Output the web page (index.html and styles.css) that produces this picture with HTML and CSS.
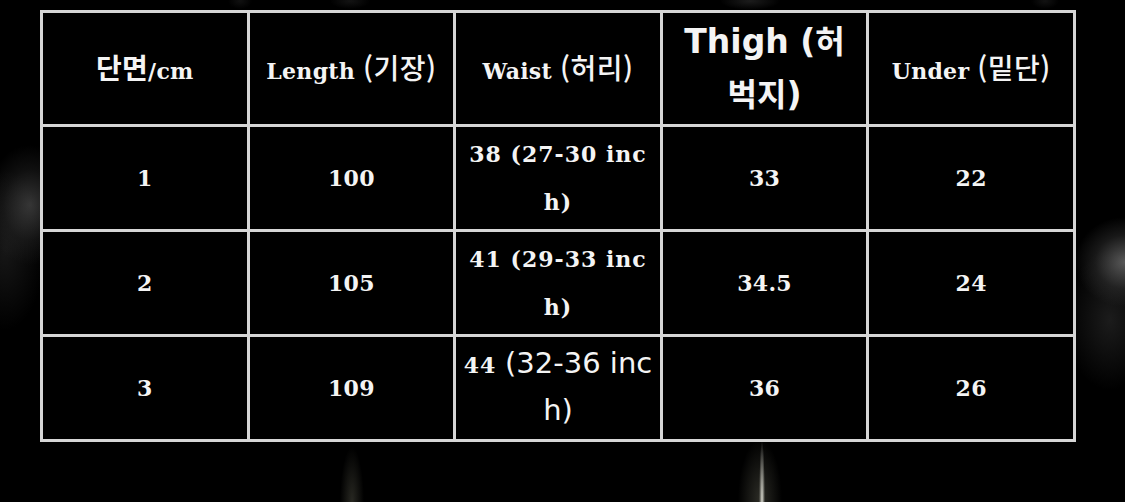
FILE: index.html
```html
<!DOCTYPE html>
<html lang="ko">
<head>
<meta charset="utf-8">
<title>Size chart</title>
<link rel="stylesheet" href="styles.css">
</head>
<body>
<div class="stage">
  <table class="chart">
    <tr class="head">
      <td><span class="ko-b">단면</span>/cm</td>
      <td>Length <span class="ko">(기장)</span></td>
      <td>Waist <span class="ko">(허리)</span></td>
      <td class="thigh">Thigh (<span class="ko-b">허</span><br><span class="ko-b">벅지</span>)</td>
      <td>Under <span class="ko">(밑단)</span></td>
    </tr>
    <tr>
      <td>1</td>
      <td>100</td>
      <td class="two">38 (27-30 inc<br>h)</td>
      <td>33</td>
      <td>22</td>
    </tr>
    <tr>
      <td>2</td>
      <td>105</td>
      <td class="two">41 (29-33 inc<br>h)</td>
      <td>34.5</td>
      <td>24</td>
    </tr>
    <tr class="last">
      <td>3</td>
      <td>109</td>
      <td class="two mixed">44 <span class="sans">(32-36 inc</span><br><span class="sans">h)</span></td>
      <td>36</td>
      <td>26</td>
    </tr>
  </table>
</div>
</body>
</html>
```
FILE: styles.css
```css
html, body {
  margin: 0;
  padding: 0;
}
body {
  width: 1125px;
  height: 502px;
  overflow: hidden;
  background-color: #000;
  background-image:
    radial-gradient(ellipse 45px 60px at 30px 205px, rgba(95,95,95,0.55), rgba(50,50,50,0.3) 60%, rgba(0,0,0,0) 100%),
    radial-gradient(ellipse 40px 80px at 5px 250px, rgba(45,45,45,0.5), rgba(0,0,0,0) 100%),
    radial-gradient(ellipse 50px 45px at 1125px 262px, rgba(125,125,125,0.7), rgba(70,70,70,0.35) 60%, rgba(0,0,0,0) 100%),
    radial-gradient(ellipse 45px 70px at 1110px 320px, rgba(55,55,55,0.5), rgba(0,0,0,0) 100%),
    radial-gradient(ellipse 3px 60px at 762px 500px, rgba(230,230,220,0.9), rgba(0,0,0,0) 100%),
    radial-gradient(ellipse 22px 60px at 760px 500px, rgba(110,110,95,0.4), rgba(0,0,0,0) 100%),
    radial-gradient(ellipse 12px 55px at 352px 502px, rgba(100,100,85,0.4), rgba(0,0,0,0) 100%),
    radial-gradient(ellipse 30px 9px at 750px 1px, rgba(70,70,70,0.4), rgba(0,0,0,0) 100%),
    radial-gradient(ellipse 20px 8px at 350px 1px, rgba(55,55,55,0.35), rgba(0,0,0,0) 100%),
    radial-gradient(ellipse 12px 8px at 240px 1px, rgba(55,55,55,0.3), rgba(0,0,0,0) 100%),
    radial-gradient(ellipse 14px 8px at 1045px 1px, rgba(60,60,60,0.3), rgba(0,0,0,0) 100%);
  background-repeat: no-repeat;
  font-family: "DejaVu Serif", "Liberation Serif", "Noto Sans CJK KR", serif;
  color: #f4f4f4;
}
.stage {
  padding: 10px 0 0 40px;
}
.chart {
  border-collapse: collapse;
  table-layout: fixed;
  width: 1036px;
  background: #000;
}
.chart td {
  border: 3px solid #d6d6d6;
  text-align: center;
  vertical-align: middle;
  padding: 0;
  height: 102px;
  font-size: 22px;
  font-weight: 700;
  line-height: 28px;
  letter-spacing: 0.3px;
}
.chart .head td {
  height: 107px;
}
.chart .last td {
  height: 102px;
}
.ko {
  font-family: "Noto Sans CJK KR", sans-serif;
  font-weight: 500;
  font-size: 28px;
  letter-spacing: 0.5px;
}
.ko-b {
  font-family: "Noto Sans CJK KR", sans-serif;
  font-weight: 700;
  font-size: 28px;
}
.chart .thigh {
  font-family: "DejaVu Sans", "Noto Sans CJK KR", sans-serif;
  font-size: 33px;
  line-height: 51px;
  letter-spacing: 0;
  padding-bottom: 4px;
}
.thigh .ko-b {
  font-size: 32px;
}
.chart .two {
  line-height: 48px;
  letter-spacing: 1px;
}
.chart .two.mixed {
  line-height: 45px;
}
.sans {
  font-family: "DejaVu Sans", sans-serif;
  font-weight: 400;
  font-size: 29px;
  letter-spacing: 0;
}
```
